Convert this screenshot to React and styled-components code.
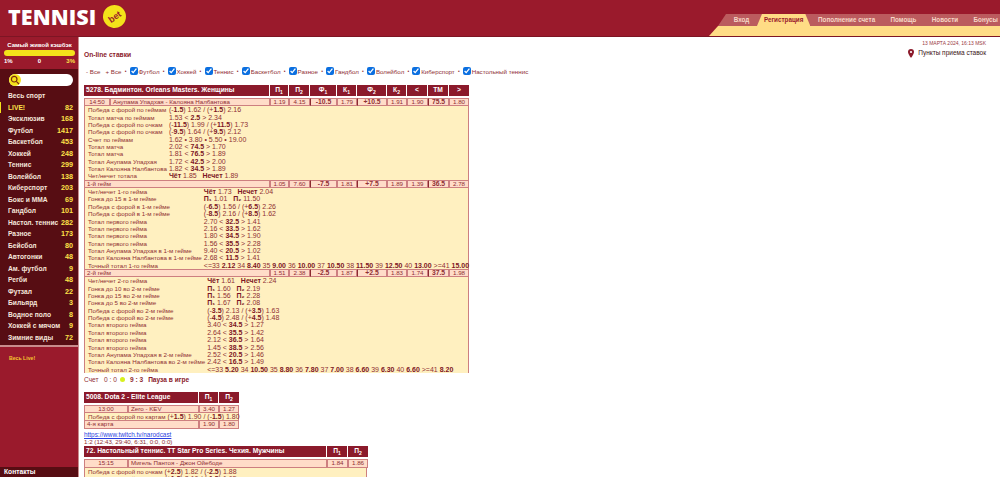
import React from 'react'
import styled, { createGlobalStyle } from 'styled-components'

const GlobalStyle = createGlobalStyle`
  html, body {
    margin: 0;
    padding: 0;
    height: 100%;
    overflow: hidden;
    background: #fff;
    font-family: "Liberation Sans", Arial, sans-serif;
  }
`

const RED = '#9a1a2c'
const DARK = '#8b1a2b'
const LINE = '#cd7f80'
const TEXT = '#8f2f33'

const Page = styled.div`
  height: 477px;
  overflow: hidden;
`
const Header = styled.header`
  height: 36px;
  background: ${RED};
  border-bottom: 1px solid #7d1524;
  display: flex;
  justify-content: space-between;
  align-items: flex-end;
`
const Logo = styled.div`
  align-self: flex-start;
  display: flex;
  align-items: center;
  gap: 7px;
  padding: 4px 0 0 8px;
`
const LogoWord = styled.span`
  font-family: "Open Sans", sans-serif;
  font-weight: 800;
  font-size: 21.5px;
  line-height: 25px;
  letter-spacing: 0.1px;
  color: #fff;
`
const LogoBadge = styled.span`
  width: 23px;
  height: 23px;
  border-radius: 50%;
  background: #f4e21a;
  color: ${RED};
  font-size: 9px;
  font-weight: 700;
  display: flex;
  align-items: center;
  justify-content: center;
  transform: rotate(-35deg);
`
const Nav = styled.nav`
  width: 291px;
`
const Tabs = styled.ul`
  list-style: none;
  margin: 0 0 0 9px;
  padding: 0 0 0 8px;
  height: 12px;
  background: #bb5b5e;
  clip-path: polygon(8px 0, 100% 0, 100% 100%, 0 100%);
  display: flex;
`
const Tab = styled.li`
  padding: 0 ${p => (p.$active ? 7 : 7.7)}px;
  font-size: 6.3px;
  font-weight: 700;
  line-height: 12px;
  white-space: nowrap;
  color: ${p => (p.$active ? RED : '#f6d8c8')};
  background: ${p => (p.$active ? '#ffdc85' : 'transparent')};
  clip-path: ${p => (p.$active ? 'polygon(5px 0, calc(100% - 5px) 0, 100% 100%, 0 100%)' : 'none')};
`
const Band = styled.div`
  height: 10px;
  background: #ffdc85;
  clip-path: polygon(9px 0, 100% 0, 100% 100%, 0 100%);
`
const Body = styled.div`
  display: flex;
  gap: 5px;
`
const Sidebar = styled.aside`
  width: 78px;
  height: 440px;
  flex: none;
  background: ${RED};
  border-right: 1px solid #c98c8c;
  display: flex;
  flex-direction: column;
`
const Cashback = styled.div`
  height: 32px;
  padding: 5px 3px 0 4px;
  box-sizing: border-box;
  color: #fff;
  font-size: 6px;
  font-weight: 700;
  text-align: center;
  line-height: 7px;
  white-space: nowrap;
`
const CashbackBar = styled.div`
  height: 6px;
  margin-top: 1px;
  border-radius: 3px;
  background: #f4e21a;
`
const CashbackScale = styled.div`
  display: flex;
  justify-content: space-between;
  margin-top: 2px;
  line-height: 7px;
`
const ScaleMark = styled.span`
  color: ${p => (p.$hot ? '#ffe44a' : '#fff')};
`
const SportPanel = styled.div`
  background: #570d13;
  height: 278px;
  border-bottom: 2px solid #c98c8c;
  box-sizing: border-box;
  padding: 5px 0 0;
`
const Search = styled.div`
  height: 12px;
  margin: 0 5px 0 9px;
  border-radius: 6px;
  background: #fff;
`
const SearchIcon = styled.span`
  width: 12px;
  height: 12px;
  border-radius: 50%;
  background: #f4e21a;
  display: flex;
  align-items: center;
  justify-content: center;
`
const SportList = styled.ul`
  list-style: none;
  margin: 4px 0 0;
  padding: 0;
`
const Sport = styled.li`
  height: 11.52px;
  line-height: 11.52px;
  padding: 0 5px 0 ${p => (p.$live ? 7 : 8)}px;
  display: flex;
  justify-content: space-between;
  white-space: nowrap;
  font-size: 6.7px;
  font-weight: 700;
  color: ${p => (p.$live ? '#ffe44a' : '#f5e6dc')};
  border-left: ${p => (p.$live ? '1px solid #f4e21a' : 'none')};
`
const SportCount = styled.span`
  font-size: 7.2px;
  color: #ffe44a;
`
const AllLive = styled.a`
  margin: 8px 0 0 9px;
  font-size: 5.2px;
  font-weight: 700;
  color: #f4c430;
`
const Contacts = styled.div`
  margin-top: auto;
  height: 10px;
  line-height: 10px;
  padding-left: 4px;
  background: #570d13;
  color: #fff;
  font-size: 6.7px;
  font-weight: 700;
`
const Main = styled.main`
  flex: 1;
  min-width: 0;
  position: relative;
`
const TopInfo = styled.div`
  position: absolute;
  top: 2px;
  right: 14px;
  text-align: right;
`
const DateLine = styled.div`
  font-size: 5px;
  line-height: 8px;
  color: #9b3a3f;
`
const PointsLine = styled.div`
  margin-top: 1px;
  display: flex;
  align-items: center;
  gap: 4px;
  font-size: 6.5px;
  line-height: 10px;
  color: #3a1414;
`
const Title = styled.h1`
  margin: 0;
  padding-top: 13px;
  font-size: 6.7px;
  line-height: 9px;
  font-weight: 700;
  color: ${DARK};
`
const Filters = styled.div`
  display: flex;
  align-items: center;
  margin-top: 7px;
  height: 10px;
  font-size: 6.2px;
  color: ${TEXT};
  white-space: nowrap;
`
const FilterAll = styled.span`
  margin-left: 2px;
  margin-right: 5px;
`
const Dot = styled.span`
  width: 8.2px;
  text-align: center;
  font-size: 5px;
`
const FilterItem = styled.label`
  display: flex;
  align-items: center;
  gap: 0.8px;
`
const Check = styled.input`
  width: 8px;
  height: 8px;
  margin: 0;
  accent-color: #0b6fe0;
`
const Market = styled.section`
  margin-top: ${p => p.$top}px;
  width: ${p => p.$width}px;
`
const Row = styled.div`
  display: grid;
  grid-template-columns: ${p => p.$cols};
  column-gap: 1px;
  margin-bottom: ${p => p.$after || 0}px;
`
const HeadCell = styled.div`
  grid-column: ${p => (p.$wide ? 'span 2' : 'auto')};
  height: 10.7px;
  line-height: 10.7px;
  background: ${DARK};
  color: #fff;
  font-size: 6.7px;
  font-weight: 700;
  text-align: ${p => (p.$wide ? 'left' : 'center')};
  padding-left: ${p => (p.$wide ? 2 : 0)}px;
  white-space: nowrap;
  overflow: hidden;
  & sub {
    font-size: 5px;
    line-height: 0;
  }
`
const Cell = styled.div`
  grid-column: ${p => (p.$wide ? 'span 2' : 'auto')};
  height: 6.5px;
  line-height: 6.5px;
  background: #ffdcc8;
  border: 1px solid ${LINE};
  border-left-color: ${p => (p.$strong ? '#8b2a2f' : LINE)};
  margin-right: -1px;
  color: ${TEXT};
  font-size: ${p => (p.$strong ? 6.8 : 6.2)}px;
  font-weight: ${p => (p.$strong ? 700 : 400)};
  text-align: ${p => (p.$left ? 'left' : 'center')};
  padding-left: ${p => (p.$left ? 2 : 0)}px;
  white-space: nowrap;
  overflow: hidden;
  &:last-child {
    margin-right: 0;
  }
`
const Detail = styled.div`
  display: grid;
  grid-template-columns: max-content 1fr;
  column-gap: 2px;
  background: #fff0c0;
  border: 1px solid ${LINE};
  border-top: 0;
  border-bottom: 0;
  padding-left: 3px;
  color: ${TEXT};
  font-size: 6.2px;
  line-height: 7.35px;
  white-space: nowrap;
  & b {
    color: #7d1524;
  }
`
const Value = styled.span`
  font-size: 7px;
  white-space: pre;
`
const Score = styled.div`
  display: flex;
  align-items: center;
  gap: 3px;
  margin-top: 2px;
  height: 9px;
  font-size: 6.6px;
  color: ${TEXT};
`
const ScoreBall = styled.span`
  width: 5px;
  height: 5px;
  margin-right: 2px;
  border-radius: 50%;
  background: #d7f01e;
`
const ScorePause = styled.b`
  margin-left: 2px;
  color: ${DARK};
`
const StreamLink = styled.a`
  display: block;
  margin-top: 2px;
  font-size: 6.4px;
  line-height: 7px;
  color: #2a3fe0;
`
const Note = styled.div`
  font-size: 6.2px;
  line-height: 7px;
  color: ${TEXT};
`

// *x* marks the bold parts of a line
const rich = s => s.split('*').map((part, i) => (i % 2 ? <b key={i}>{part}</b> : part))

const sports = [
  ['Весь спорт', ''], ['LIVE!', 82], ['Эксклюзив', 168], ['Футбол', 1417], ['Баскетбол', 453],
  ['Хоккей', 248], ['Теннис', 299], ['Волейбол', 138], ['Киберспорт', 203], ['Бокс и ММА', 69],
  ['Гандбол', 101], ['Настол. теннис', 282], ['Разное', 173], ['Бейсбол', 80], ['Автогонки', 48],
  ['Ам. футбол', 9], ['Регби', 48], ['Футзал', 22], ['Бильярд', 3], ['Водное поло', 8],
  ['Хоккей с мячом', 9], ['Зимние виды', 72],
]
const tabs = ['Вход', 'Регистрация', 'Пополнение счета', 'Помощь', 'Новости', 'Бонусы']
const filters = ['Футбол', 'Хоккей', 'Теннис', 'Баскетбол', 'Разное', 'Гандбол', 'Волейбол', 'Киберспорт', 'Настольный теннис']

const bigCols = '25px 159px 18px 20px 26px 19px 29px 19px 20px 20px 20px'
const bigHead = [['П', 1], ['П', 2], ['Ф', 1], ['К', 1], ['Ф', 2], ['К', 2], ['<'], ['ТМ'], ['>']]
const strongIdx = [2, 4, 7]

const match = [
  ['Победа с форой по геймам', '(-*1.5*) 1.62 / (+*1.5*) 2.16'],
  ['Тотал матча по геймам', '1.53 < *2.5* > 2.34'],
  ['Победа с форой по очкам', '(-*11.5*) 1.99 / (+*11.5*) 1.73'],
  ['Победа с форой по очкам', '(-*9.5*) 1.64 / (+*9.5*) 2.12'],
  ['Счет по геймам', '1.62 • 3.80 • 5.50 • 19.00'],
  ['Тотал матча', '2.02 < *74.5* > 1.70'],
  ['Тотал матча', '1.81 < *76.5* > 1.89'],
  ['Тотал Анупама Упадхая', '1.72 < *42.5* > 2.00'],
  ['Тотал Калояна Налбантова', '1.82 < *34.5* > 1.89'],
  ['Чет/нечет тотала', '*Чёт* 1.85   *Нечет* 1.89'],
]
const game1 = [
  ['Чет/нечет 1-го гейма', '*Чёт* 1.73   *Нечет* 2.04'],
  ['Гонка до 15 в 1-м гейме', '*П₁* 1.01   *П₂* 11.50'],
  ['Победа с форой в 1-м гейме', '(-*6.5*) 1.56 / (+*6.5*) 2.26'],
  ['Победа с форой в 1-м гейме', '(-*8.5*) 2.16 / (+*8.5*) 1.62'],
  ['Тотал первого гейма', '2.70 < *32.5* > 1.41'],
  ['Тотал первого гейма', '2.16 < *33.5* > 1.62'],
  ['Тотал первого гейма', '1.80 < *34.5* > 1.90'],
  ['Тотал первого гейма', '1.56 < *35.5* > 2.28'],
  ['Тотал Анупама Упадхая в 1-м гейме', '9.40 < *20.5* > 1.02'],
  ['Тотал Калояна Налбантова в 1-м гейме', '2.68 < *11.5* > 1.41'],
  ['Точный тотал 1-го гейма', '<=33 *2.12* 34 *8.40* 35 *9.00* 36 *10.00* 37 *10.50* 38 *11.50* 39 *12.50* 40 *13.00* >=41 *15.00*'],
]
const game2 = [
  ['Чет/нечет 2-го гейма', '*Чёт* 1.61   *Нечет* 2.24'],
  ['Гонка до 10 во 2-м гейме', '*П₁* 1.60   *П₂* 2.19'],
  ['Гонка до 15 во 2-м гейме', '*П₁* 1.56   *П₂* 2.28'],
  ['Гонка до 5 во 2-м гейме', '*П₁* 1.67   *П₂* 2.08'],
  ['Победа с форой во 2-м гейме', '(-*3.5*) 2.13 / (+*3.5*) 1.63'],
  ['Победа с форой во 2-м гейме', '(-*4.5*) 2.48 / (+*4.5*) 1.48'],
  ['Тотал второго гейма', '3.40 < *34.5* > 1.27'],
  ['Тотал второго гейма', '2.64 < *35.5* > 1.42'],
  ['Тотал второго гейма', '2.12 < *36.5* > 1.64'],
  ['Тотал второго гейма', '1.45 < *38.5* > 2.56'],
  ['Тотал Анупама Упадхая в 2-м гейме', '2.52 < *20.5* > 1.46'],
  ['Тотал Калояна Налбантова во 2-м гейме', '2.42 < *16.5* > 1.49'],
  ['Точный тотал 2-го гейма', '<=33 *5.20* 34 *10.50* 35 *8.80* 36 *7.80* 37 *7.00* 38 *6.60* 39 *6.30* 40 *6.60* >=41 *8.20*'],
]

function Lines ({ rows }) {
  return (
    <Detail>
      {rows.map(([label, value], i) => (
        <React.Fragment key={i}>
          <span>{label}</span>
          <Value>{rich(value)}</Value>
        </React.Fragment>
      ))}
    </Detail>
  )
}

function Head ({ cols, title, cells }) {
  return (
    <Row $cols={cols} $after={2}>
      <HeadCell $wide>{title}</HeadCell>
      {cells.map(([t, n], i) => (
        <HeadCell key={i}>{t}{n && <sub>{n}</sub>}</HeadCell>
      ))}
    </Row>
  )
}

function Odds ({ cols, time, name, odds }) {
  return (
    <Row $cols={cols}>
      {time ? <Cell>{time}</Cell> : null}
      <Cell $left $wide={!time}>{name}</Cell>
      {odds.map((v, i) => (
        <Cell key={i} $strong={odds.length > 2 && strongIdx.includes(i)}>{v}</Cell>
      ))}
    </Row>
  )
}

export default function App () {
  return (
    <Page>
      <GlobalStyle />
      <Header>
        <Logo>
          <LogoWord>TENNISI</LogoWord>
          <LogoBadge>bet</LogoBadge>
        </Logo>
        <Nav>
          <Tabs>
            {tabs.map((t, i) => <Tab key={t} $active={i === 1}>{t}</Tab>)}
          </Tabs>
          <Band />
        </Nav>
      </Header>
      <Body>
        <Sidebar>
          <Cashback>
            Самый живой кэшбэк
            <CashbackBar />
            <CashbackScale>
              <ScaleMark>1%</ScaleMark>
              <ScaleMark>0</ScaleMark>
              <ScaleMark $hot>3%</ScaleMark>
            </CashbackScale>
          </Cashback>
          <SportPanel>
            <Search>
              <SearchIcon>
                <svg width="10" height="10" viewBox="0 0 10 10" fill="none" stroke="#7a2a10" strokeWidth="1.2">
                  <circle cx="4.2" cy="4.2" r="2.8" />
                  <path d="M6.3 6.3 9 9" />
                </svg>
              </SearchIcon>
            </Search>
            <SportList>
              {sports.map(([name, n]) => (
                <Sport key={name} $live={name === 'LIVE!'}>
                  <span>{name}</span>
                  <SportCount>{n}</SportCount>
                </Sport>
              ))}
            </SportList>
          </SportPanel>
          <AllLive>Весь Live!</AllLive>
          <Contacts>Контакты</Contacts>
        </Sidebar>
        <Main>
          <TopInfo>
            <DateLine>13 МАРТА 2024, 16:13 MSK</DateLine>
            <PointsLine>
              <svg width="6" height="9" viewBox="0 0 6 9">
                <path d="M3 0a3 3 0 0 1 3 3c0 2-3 6-3 6S0 5 0 3a3 3 0 0 1 3-3z" fill="#8b1a2b" />
                <circle cx="3" cy="3" r="1.1" fill="#fff" />
              </svg>
              Пункты приема ставок
            </PointsLine>
          </TopInfo>
          <Title>On-line ставки</Title>
          <Filters>
            <FilterAll>- Все</FilterAll>
            <span>+ Все</span>
            <Dot>•</Dot>
            {filters.map((f, i) => (
              <React.Fragment key={f}>
                <FilterItem>
                  <Check type="checkbox" defaultChecked />
                  {f}
                </FilterItem>
                {i < filters.length - 1 && <Dot>•</Dot>}
              </React.Fragment>
            ))}
          </Filters>

          <Market $top={9} $width={385}>
            <Head cols={bigCols} title="5278. Бадминтон. Orleans Masters. Женщины" cells={bigHead} />
            <Odds cols={bigCols} time="14:50" name="Анупама Упадхая - Калояна Налбантова"
              odds={['1.19', '4.15', '-10.5', '1.79', '+10.5', '1.91', '1.90', '75.5', '1.80']} />
            <Lines rows={match} />
            <Odds cols={bigCols} name="1-й гейм"
              odds={['1.05', '7.60', '-7.5', '1.81', '+7.5', '1.89', '1.39', '36.5', '2.78']} />
            <Lines rows={game1} />
            <Odds cols={bigCols} name="2-й гейм"
              odds={['1.51', '2.38', '-2.5', '1.87', '+2.5', '1.83', '1.74', '37.5', '1.98']} />
            <Lines rows={game2} />
          </Market>
          <Score>
            Счет &nbsp;&nbsp;0 : 0 <ScoreBall /> <b>9 : 3</b>
            <ScorePause>Пауза в игре</ScorePause>
          </Score>

          <Market $top={8} $width={155}>
            <Head cols="43px 70px 19px 20px" title="5008. Dota 2 - Elite League" cells={[['П', 1], ['П', 2]]} />
            <Odds cols="43px 70px 19px 20px" time="13:00" name="Zero - KEV" odds={['3.40', '1.27']} />
            <Lines rows={[['Победа с форой по картам', '(+*1.5*) 1.90 / (-*1.5*) 1.80']]} />
            <Odds cols="43px 70px 19px 20px" name="4-я карта" odds={['1.90', '1.80']} />
          </Market>
          <StreamLink href="#">https://www.twitch.tv/narodcast</StreamLink>
          <Note>1:2 (12:43, 29:40, 6:31, 0:0, 0:0)</Note>

          <Market $top={1.5} $width={283}>
            <Head cols="43px 198px 20px 20px" title="72. Настольный теннис. TT Star Pro Series. Чехия. Мужчины" cells={[['П', 1], ['П', 2]]} />
            <Odds cols="43px 198px 20px 20px" time="15:15" name="Мигель Пантоя - Джон Ойебоде" odds={['1.84', '1.86']} />
            <Lines rows={[
              ['Победа с форой по очкам', '(+*2.5*) 1.82 / (-*2.5*) 1.88'],
              ['Победа с форой по очкам', '(+*1.5*) 2.10 / (-*1.5*) 1.65'],
            ]} />
          </Market>
        </Main>
      </Body>
    </Page>
  )
}
